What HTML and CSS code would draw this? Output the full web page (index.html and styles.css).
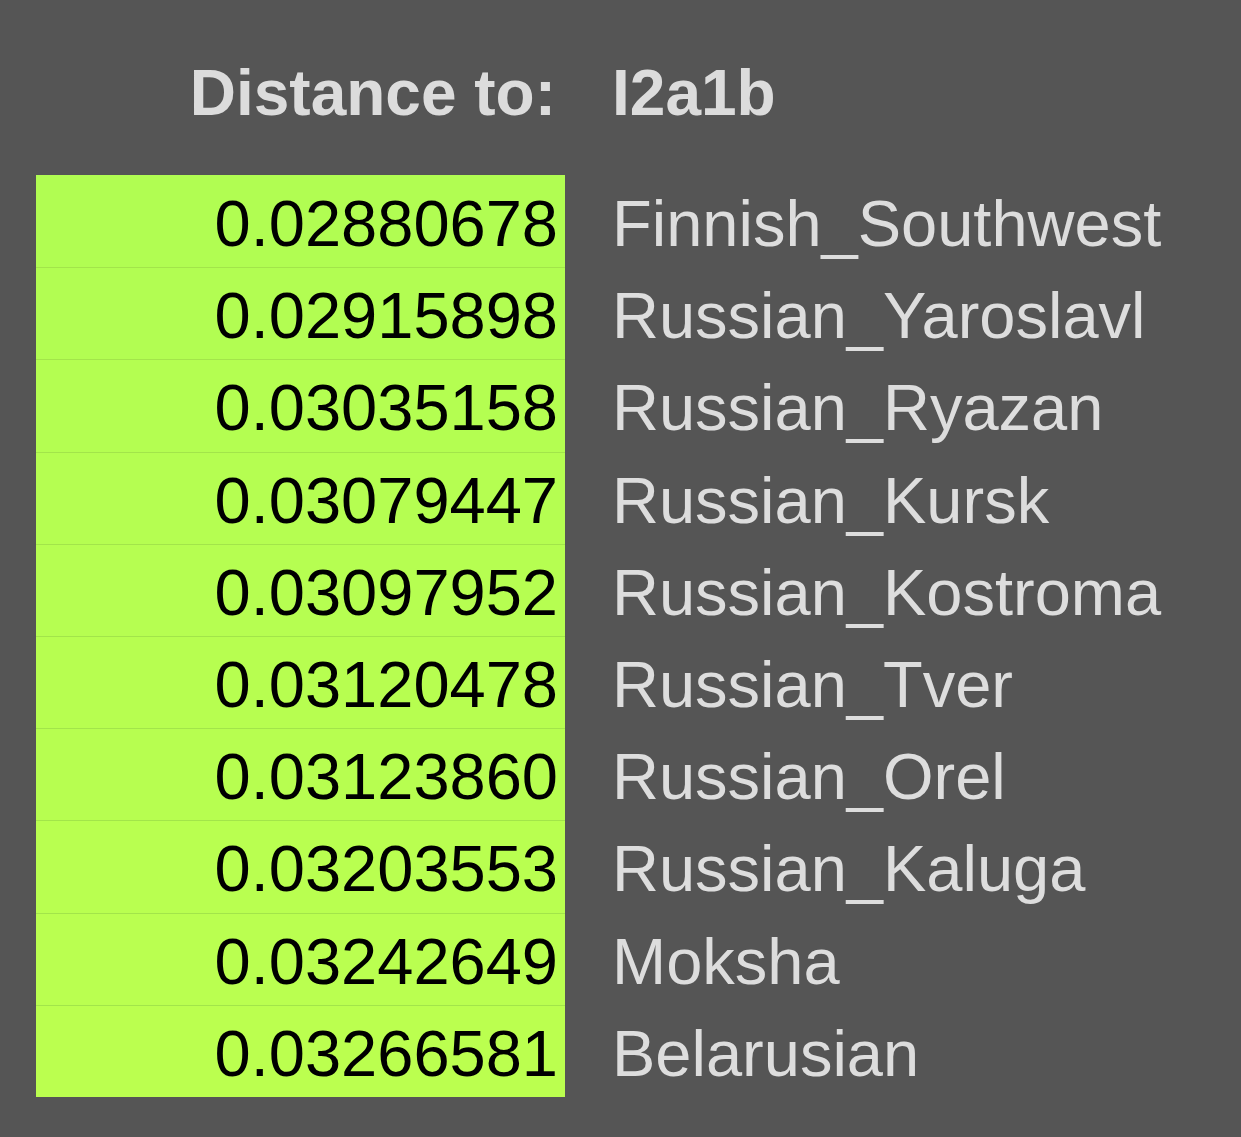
FILE: index.html
```html
<!DOCTYPE html>
<html>
<head>
<meta charset="utf-8">
<link rel="stylesheet" href="styles.css">
</head>
<body>
<div class="board">
  <div class="head">
    <div class="head-label">Distance to:</div>
    <div class="head-target">I2a1b</div>
  </div>
  <div class="rows">
    <div class="row"><div class="val" style="background:#b1fd52">0.02880678</div><div class="name">Finnish_Southwest</div></div>
    <div class="row"><div class="val" style="background:#b2fd52">0.02915898</div><div class="name">Russian_Yaroslavl</div></div>
    <div class="row"><div class="val" style="background:#b4fe51">0.03035158</div><div class="name">Russian_Ryazan</div></div>
    <div class="row"><div class="val" style="background:#b5fe51">0.03079447</div><div class="name">Russian_Kursk</div></div>
    <div class="row"><div class="val" style="background:#b6fe51">0.03097952</div><div class="name">Russian_Kostroma</div></div>
    <div class="row"><div class="val" style="background:#b7fe50">0.03120478</div><div class="name">Russian_Tver</div></div>
    <div class="row"><div class="val" style="background:#b7fe50">0.03123860</div><div class="name">Russian_Orel</div></div>
    <div class="row"><div class="val" style="background:#b9ff50">0.03203553</div><div class="name">Russian_Kaluga</div></div>
    <div class="row"><div class="val" style="background:#baff50">0.03242649</div><div class="name">Moksha</div></div>
    <div class="row"><div class="val" style="background:#bbff4f">0.03266581</div><div class="name">Belarusian</div></div>
  </div>
</div>
</body>
</html>
```

FILE: styles.css
```css
html, body {
  margin: 0;
  padding: 0;
  background: #555555;
}
body {
  width: 1241px;
  height: 1137px;
  overflow: hidden;
  font-family: "Liberation Sans", Arial, Helvetica, sans-serif;
  font-size: 64px;
}
.board {
  padding: 47px 0 0 36px;
}
.head {
  display: grid;
  grid-template-columns: 529px auto;
  column-gap: 47px;
  line-height: 92px;
  height: 92px;
  font-weight: bold;
  color: #dcdcdc;
  margin-bottom: 36px;
}
.head-label {
  text-align: right;
  padding-right: 9px;
}
.rows {
  display: flex;
  flex-direction: column;
}
.row {
  display: grid;
  grid-template-columns: 529px auto;
  column-gap: 47px;
  height: 92.2px;
  font-size: 65px;
}
.val, .name {
  box-sizing: border-box;
  height: 92.2px;
  padding-top: 7px;
  line-height: 83px;
  white-space: nowrap;
}
.val {
  text-align: right;
  padding-right: 7px;
  color: #000000;
}
.row + .row .val {
  border-top: 1px solid #a2e54a;
  padding-top: 6px;
}
.name {
  color: #dddddd;
}
```
